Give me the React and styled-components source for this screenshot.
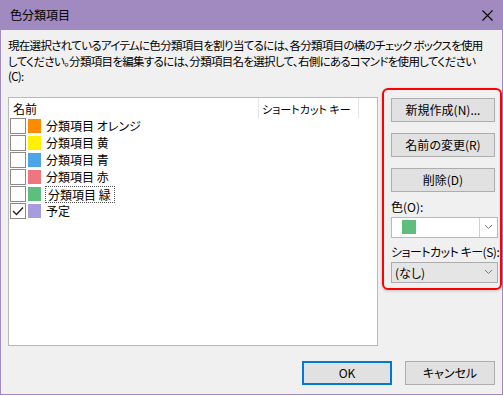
import React from 'react';
import styled, { createGlobalStyle } from 'styled-components';

const GlobalStyle = createGlobalStyle`
    html, body {
        margin: 0;
        padding: 0;
        background: #ffffff;
    }
    body {
        font-family: "Noto Sans CJK JP", "Noto Sans", sans-serif;
        font-size: 12px;
        font-feature-settings: "palt";
        color: #000000;
    }
`;

const purple = '#a08abf';

const Window = styled.div`
    width: 503px;
    height: 395px;
    box-sizing: border-box;
    border: 1px solid ${purple};
    border-top: none;
    background: #f0f0f0;
    display: flex;
    flex-direction: column;
`;

const TitleBar = styled.div`
    height: 30px;
    flex-shrink: 0;
    background: ${purple};
    display: flex;
    align-items: center;
    justify-content: space-between;
    padding: 0 10px 0 9px;
`;

const Title = styled.div`
    font-size: 12px;
    line-height: 14px;
`;

const CloseIcon = styled.svg`
    width: 11px;
    height: 11px;
    margin-right: -1px;
`;

const Body = styled.div`
    flex: 1;
    padding: 8px 0 0 7px;
    display: flex;
    flex-direction: column;
`;

const Description = styled.div`
    font-size: 11.5px;
    line-height: 15.5px;
    white-space: nowrap;
    letter-spacing: -0.7px;
`;

const MainRow = styled.div`
    display: flex;
    align-items: flex-start;
    margin-top: 3px;
`;

const ListBox = styled.div`
    width: 370px;
    height: 249px;
    box-sizing: border-box;
    margin-top: 9px;
    margin-right: 4px;
    background: #ffffff;
    border: 1px solid #b9b9b9;
    display: flex;
    flex-direction: column;
`;

const HeaderRow = styled.div`
    height: 20px;
    display: flex;
    flex-shrink: 0;
`;

const HeaderCell = styled.div`
    width: ${p => p.width}px;
    box-sizing: border-box;
    padding-left: ${p => p.pad}px;
    border-right: 1px solid #e5e5e5;
    line-height: 22px;
    font-size: ${p => p.small ? 11 : 12}px;
    white-space: nowrap;
`;

const Row = styled.div`
    height: 17px;
    display: flex;
    align-items: flex-start;
    padding-left: 1px;
`;

const CheckBox = styled.div`
    width: 16px;
    height: 16px;
    box-sizing: border-box;
    border: 1px solid #8a8a8a;
    background: #ffffff;
    display: flex;
    align-items: center;
    justify-content: center;
`;

const Swatch = styled.div`
    width: 13px;
    height: 14px;
    margin-left: 2px;
    margin-top: 1px;
    background: ${p => p.color};
`;

const RowLabel = styled.div`
    margin-left: ${p => p.focused ? 4 : 5}px;
    padding: 0 ${p => p.focused ? 3 : 0}px 0 ${p => p.focused ? 2 : 0}px;
    height: 17px;
    box-sizing: border-box;
    line-height: 15px;
    border: ${p => p.focused ? '1px dotted #555555' : 'none'};
    white-space: nowrap;
`;

const CommandBox = styled.div`
    width: 120px;
    height: 202px;
    box-sizing: border-box;
    margin-right: -1px;
    border: 2px solid #ff0000;
    border-radius: 6px;
    box-shadow: 0 1px 3px rgba(0, 0, 0, 0.2);
    padding: 8px 4px 0 7px;
    display: flex;
    flex-direction: column;
`;

const Button = styled.div`
    width: ${p => p.width || 104}px;
    height: 24px;
    box-sizing: border-box;
    background: #e1e1e1;
    border: ${p => p.primary ? '2px solid #0078d7' : '1px solid #adadad'};
    display: flex;
    align-items: center;
    justify-content: center;
    margin-bottom: ${p => p.gap || 0}px;
    white-space: nowrap;
`;

const FieldLabel = styled.div`
    line-height: 15px;
    margin: ${p => p.top}px 0 3px;
    white-space: nowrap;
    letter-spacing: ${p => p.tight ? '-0.5px' : '0'};
`;

const Combo = styled.div`
    width: 107px;
    height: 21px;
    box-sizing: border-box;
    background: ${p => p.grey ? '#e5e5e5' : '#ffffff'};
    border: 1px solid ${p => p.grey ? '#acacac' : '#b9b9b9'};
    display: flex;
    align-items: center;
`;

const ComboValue = styled.div`
    flex: 1;
    padding-left: ${p => p.pad}px;
    display: flex;
    align-items: center;
    line-height: 15px;
`;

const ComboArrow = styled.div`
    width: 18px;
    height: 100%;
    box-sizing: border-box;
    border-left: ${p => p.split ? '1px solid #cfcfcf' : 'none'};
    display: flex;
    align-items: center;
    justify-content: center;
`;

const ColorChip = styled.div`
    width: 14px;
    height: 14px;
    background: #5fbe7d;
`;

const Footer = styled.div`
    display: flex;
    justify-content: flex-end;
    gap: 13px;
    margin-top: 15px;
    padding-right: 7px;
`;

const categories = [
    { name: '分類項目 オレンジ', color: '#ff8c00' },
    { name: '分類項目 黄', color: '#fff100' },
    { name: '分類項目 青', color: '#4ca5e6' },
    { name: '分類項目 赤', color: '#f1757e' },
    { name: '分類項目 緑', color: '#5dbe7e', focused: true },
    { name: '予定', color: '#a89ce0', checked: true },
];

const Chevron = () => (
    <svg width="9" height="6" viewBox="0 0 9 6">
        <path d="M1 1 L4.5 4.5 L8 1" fill="none" stroke="#7a7a7a" strokeWidth="1" />
    </svg>
);

const Check = () => (
    <svg width="12" height="10" viewBox="0 0 12 10">
        <path d="M1 5 L4.5 8.5 L11 1.5" fill="none" stroke="#222222" strokeWidth="1.4" />
    </svg>
);

const App = () => {
    return (
        <>
            <GlobalStyle />
            <Window>
                <TitleBar>
                    <Title>色分類項目</Title>
                    <CloseIcon viewBox="0 0 11 11">
                        <path d="M0.5 0.5 L10.5 10.5 M10.5 0.5 L0.5 10.5" stroke="#000" strokeWidth="1.1" />
                    </CloseIcon>
                </TitleBar>
                <Body>
                    <Description>
                        現在選択されているアイテムに色分類項目を割り当てるには、各分類項目の横のチェック ボックスを使用<br />
                        してください。分類項目を編集するには、分類項目名を選択して、右側にあるコマンドを使用してください<br />
                        (C):
                    </Description>
                    <MainRow>
                        <ListBox>
                            <HeaderRow>
                                <HeaderCell width={250} pad={4}>名前</HeaderCell>
                                <HeaderCell width={100} pad={3} small>ショートカット キー</HeaderCell>
                            </HeaderRow>
                            {categories.map((cat) => (
                                <Row key={cat.name}>
                                    <CheckBox>{cat.checked && <Check />}</CheckBox>
                                    <Swatch color={cat.color} />
                                    <RowLabel focused={cat.focused}>{cat.name}</RowLabel>
                                </Row>
                            ))}
                        </ListBox>
                        <CommandBox>
                            <Button gap={11}>新規作成(N)...</Button>
                            <Button gap={11}>名前の変更(R)</Button>
                            <Button>削除(D)</Button>
                            <FieldLabel top={7}>色(O):</FieldLabel>
                            <Combo>
                                <ComboValue pad={10}><ColorChip /></ComboValue>
                                <ComboArrow split><Chevron /></ComboArrow>
                            </Combo>
                            <FieldLabel top={6} tight>ショートカット キー(S):</FieldLabel>
                            <Combo grey>
                                <ComboValue pad={3}>(なし)</ComboValue>
                                <ComboArrow><Chevron /></ComboArrow>
                            </Combo>
                        </CommandBox>
                    </MainRow>
                    <Footer>
                        <Button width={90} primary>OK</Button>
                        <Button width={90}>キャンセル</Button>
                    </Footer>
                </Body>
            </Window>
        </>
    );
};

export default App;
